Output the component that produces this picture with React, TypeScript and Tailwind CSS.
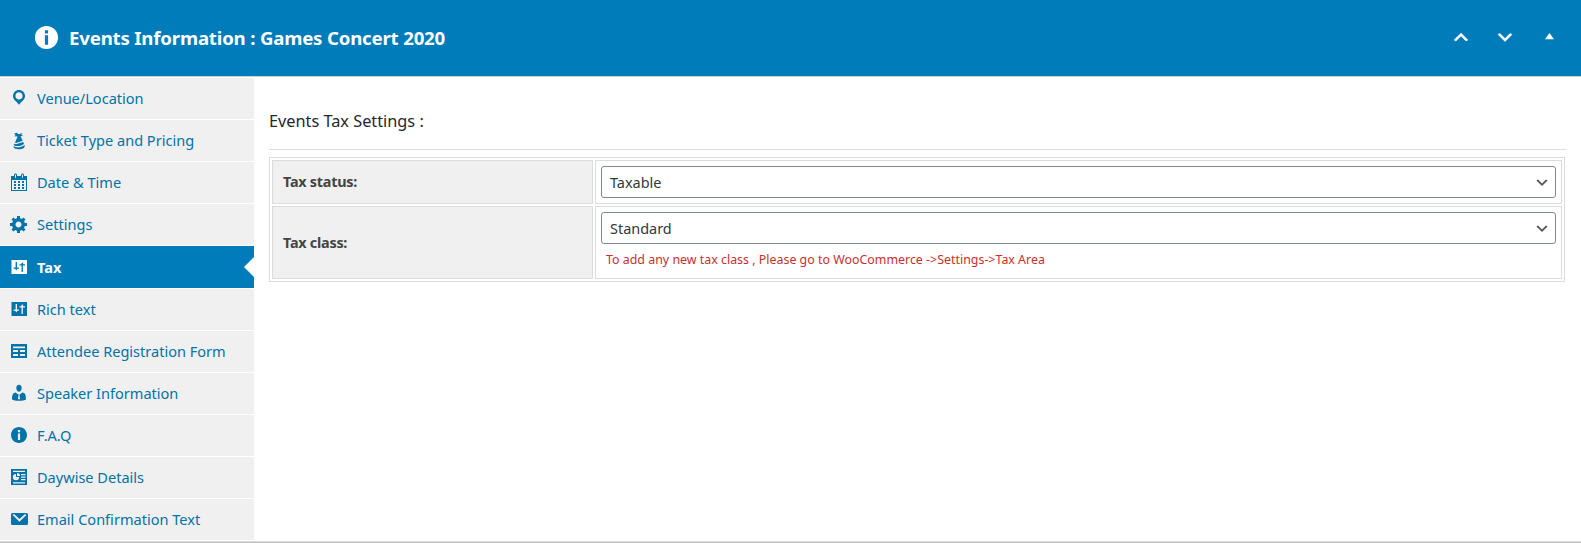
import React from "react";

const ICONS = {
  location:
    "M10 2C6.69 2 4 4.69 4 8c0 2.02 1.17 3.71 2.53 4.89.43.37 1.18.96 1.85 1.83.74.97 1.41 1.71 1.62 2.11.21-.4.88-1.14 1.62-2.11.67-.87 1.42-1.46 1.85-1.83C14.83 11.71 16 10.02 16 8c0-3.31-2.69-6-6-6zm0 2.30c2 0 3.600 1.600 3.600 3.600S12 11.500 10 11.500 6.400 9.900 6.400 7.900 8 4.300 10 4.300z",
  hat:
    "M5 3.800L7.500 2.800 9.800 4.300 13.600 3 12.300 4.600 14 5.900 11.400 6.300 13.800 10.800 7 12.900 6 12.600 8.700 6.400 5.400 6.200 6.700 5zM5.500 13.700L7 14.200 14.200 12 15 13.700C13 16.200 7 16.900 4.700 14.900zM4.300 16C7.500 18.300 12.500 17.500 15.600 15 16.400 18.400 13 19.300 10 19.300S4.500 18.400 4.300 16z",
  calendar:
    "M15 4h3v15H2V4h3V3c0-.41.15-.76.44-1.06.29-.29.65-.44 1.06-.44s.77.15 1.06.44c.29.3.44.65.44 1.06v1h4V3c0-.41.15-.76.44-1.06.29-.29.65-.44 1.06-.44s.77.15 1.06.44c.29.3.44.65.44 1.06v1zM6 3v2.500c0 .14.05.26.15.36.09.09.21.14.35.14s.26-.05.35-.14c.1-.1.15-.22.15-.36V3c0-.14-.05-.26-.15-.35-.09-.1-.21-.15-.35-.15s-.26.05-.35.15c-.1.09-.15.21-.15.35zm7 0v2.500c0 .14.05.26.14.36.1.09.22.14.36.14s.26-.05.36-.14c.09-.1.14-.22.14-.36V3c0-.14-.05-.26-.14-.35-.1-.1-.22-.15-.36-.15s-.26.05-.36.15c-.09.09-.14.21-.14.35zm4 15V8H3v10h14zM7 9v2H5V9h2zm2 0h2v2H9V9zm4 2V9h2v2h-2zm-6 1v2H5v-2h2zm2 0h2v2H9v-2zm4 2v-2h2v2h-2zm-6 1v2H5v-2h2zm4 2H9v-2h2v2zm4 0h-2v-2h2v2z",
  gear:
    "M18 12h-2.180c-.17.7-.44 1.350-.81 1.930l1.540 1.540-2.100 2.100-1.540-1.540c-.58.36-1.230.63-1.910.79V19H8v-2.180c-.68-.16-1.330-.43-1.910-.79l-1.540 1.540-2.120-2.120 1.540-1.540c-.36-.58-.63-1.230-.79-1.910H1V9.030h2.170c.16-.7.44-1.350.8-1.940L2.430 5.550l2.100-2.100 1.540 1.540c.58-.37 1.240-.64 1.930-.81V2h3v2.180c.68.16 1.330.43 1.910.79l1.540-1.540 2.120 2.120-1.540 1.540c.36.59.64 1.240.8 1.940H18V12zm-8.500 1.500c1.660 0 3-1.340 3-3s-1.340-3-3-3-3 1.340-3 3 1.340 3 3 3z",
  sliders:
    "M2.500 3h15.500v14H2.500zM6.600 5v5.500H4.600v1.300h1.600L7.300 13.500 8.400 11.800H10v-1.300H8V5zM12.500 15h1.400V8.500H16V7.200h-1.500L13.200 5 12 7.200h-1.500v1.300h2z",
  table:
    "M2 3h16v14H2zM4 5.500v1.800h12V5.500zM4 9v2h5V9zM11 9v2h5V9zM4 13v2h5v-2zM11 13v2h5v-2z",
  person:
    "M10 1.800c1.700 0 2.700 1.300 2.700 3.100S11.600 8.700 10 8.700 7.300 6.700 7.300 4.900 8.300 1.800 10 1.800zM6.600 9.600L10 12 13.400 9.600C16 10 17 11.500 17 16.500 15 18.200 5 18.200 3 16.500 3 11.500 4 10 6.600 9.600zM9.400 12.300L9 16.300h2L10.600 12.300z",
  info:
    "M10 2c4.420 0 8 3.580 8 8s-3.580 8-8 8-8-3.580-8-8 3.580-8 8-8zM8.900 5v2.200h2.200V5zM8.900 8.500V15h2.200V8.500z",
  report:
    "M2 2h16v16H2zM4 3.700v1.200h12V3.700zM4 15.300v1.200h12v-1.200zM7 6.900a3.200 3.200 0 1 0 3.200 3.200H7zM8 6v3h3A3 3 0 0 0 8 6zM12 7v1.200h4.500V7zM12 9.500v1.200h4.500V9.500zM12 12v1.200h4.500V12z",
  mail:
    "M3.500 4H17.500Q19 4 19 5.500V14.500Q19 16 17.500 16H3.500Q2 16 2 14.500V5.500Q2 4 3.500 4zM3.600 6L10.500 12.800 17.400 6 16 4.900 10.500 10 5 4.900z",
};

type IconName = keyof typeof ICONS;

function Icon({ name, className }: { name: IconName; className: string }) {
  return (
    <svg viewBox="0 0 20 20" fill="currentColor" fillRule="evenodd" className={className} aria-hidden="true">
      <path d={ICONS[name]} />
    </svg>
  );
}

const TABS: { label: string; icon: IconName; active?: boolean }[] = [
  { label: "Venue/Location", icon: "location" },
  { label: "Ticket Type and Pricing", icon: "hat" },
  { label: "Date & Time", icon: "calendar" },
  { label: "Settings", icon: "gear" },
  { label: "Tax", icon: "sliders", active: true },
  { label: "Rich text", icon: "sliders" },
  { label: "Attendee Registration Form", icon: "table" },
  { label: "Speaker Information", icon: "person" },
  { label: "F.A.Q", icon: "info" },
  { label: "Daywise Details", icon: "report" },
  { label: "Email Confirmation Text", icon: "mail" },
];

function Header() {
  return (
    <header className="flex h-[77px] items-center justify-between border-b border-[#ccd0d4] bg-[#007cba] pl-[32px] text-white">
      <div className="flex items-center pb-px">
        <Icon name="info" className="size-[29px]" />
        <h1 className="ml-[8px] text-[18.65px] leading-[28px] font-bold tracking-[-0.19px] whitespace-nowrap">
          Events Information : Games Concert 2020
        </h1>
      </div>
      <div className="flex items-center gap-[24px] pr-[22px]">
        <svg viewBox="0 1 20 20" className="size-5" fill="currentColor" stroke="currentColor" strokeWidth="0.5">
          <path d="M15 14l-5-5-5 5-2-1 7-7 7 7z" />
        </svg>
        <svg viewBox="0 0.500 20 20" className="size-5" fill="currentColor" stroke="currentColor" strokeWidth="0.5">
          <path d="M5 6l5 5 5-5 2 1-7 7-7-7z" />
        </svg>
        <svg viewBox="0 0 20 20" className="size-5" fill="currentColor">
          <path d="M6 11.200l4.500-6.200 4.500 6.200z" />
        </svg>
      </div>
    </header>
  );
}

function Select({ value }: { value: string }) {
  return (
    <button className="flex h-8 w-full items-center justify-between rounded-[3px] border border-[#7e8993] bg-white pr-[5px] pl-2 text-[14.45px] text-[#32373c]">
      <span className="pt-0.5 leading-5">{value}</span>
      <svg viewBox="0 -1 20 20" className="size-4" fill="#555">
        <path d="M5 6l5 5 5-5 2 1-7 7-7-7 2-1z" />
      </svg>
    </button>
  );
}

export default function App() {
  return (
    <div className="flex h-[543px] w-full flex-col overflow-hidden bg-white font-['Noto_Sans',sans-serif]">
      <Header />
      <div className="flex flex-1">
        <nav className="w-[254px] pt-px">
          {TABS.map((t) => (
            <a
              key={t.label}
              className={
                t.active
                  ? "relative flex h-[43px] items-center border-b border-white bg-[#007cba] pl-[9px] font-bold text-white"
                  : "flex h-[42px] items-center border-b border-white bg-[#f0f0f0] pl-[9px] text-[#0073aa]"
              }
            >
              <Icon name={t.icon} className={t.active ? "size-5" : "mb-px size-5"} />
              <span
                className={
                  t.active
                    ? "ml-[8px] text-[14.6px] leading-5 whitespace-nowrap"
                    : "ml-[8px] pb-0.5 text-[14.55px] leading-5 whitespace-nowrap"
                }
              >
                {t.label}
              </span>
              {t.active && (
                <span className="absolute top-[11px] right-0 border-y-[10px] border-r-[10px] border-y-transparent border-r-white" />
              )}
            </a>
          ))}
        </nav>
        <main className="flex-1 pt-[29px] pr-[15px] pl-[15px]">
          <h2 className="h-[44px] border-b border-[#dcdcdc] text-[16.3px] leading-[30px] text-[#23282d]">
            Events Tax Settings :
          </h2>
          <div className="mt-[7px] mr-px grid grid-cols-[321px_1fr] gap-0.5 border border-[#dcdcdc] p-0.5 text-[#444]">
            <div className="flex h-11 items-center border border-[#dcdcdc] bg-[#f0f0f0] pl-2.5 text-[14.4px] font-bold tracking-[-0.25px]">
              Tax status:
            </div>
            <div className="border border-[#dcdcdc] p-[5px]">
              <Select value="Taxable" />
            </div>
            <div className="flex h-[73px] items-center border border-[#dcdcdc] bg-[#f0f0f0] pl-2.5 text-[14.4px] font-bold tracking-[-0.25px]">
              Tax class:
            </div>
            <div className="border border-[#dcdcdc] p-[5px]">
              <Select value="Standard" />
              <p className="mt-[6px] ml-[5px] text-[12.42px] leading-5 text-[#c9302c]">
                To add any new tax class , Please go to WooCommerce -&gt;Settings-&gt;Tax Area
              </p>
            </div>
          </div>
        </main>
      </div>
      <div className="h-0.5 border-t border-[#dadada] bg-[#c0c0c0]" />
    </div>
  );
}
